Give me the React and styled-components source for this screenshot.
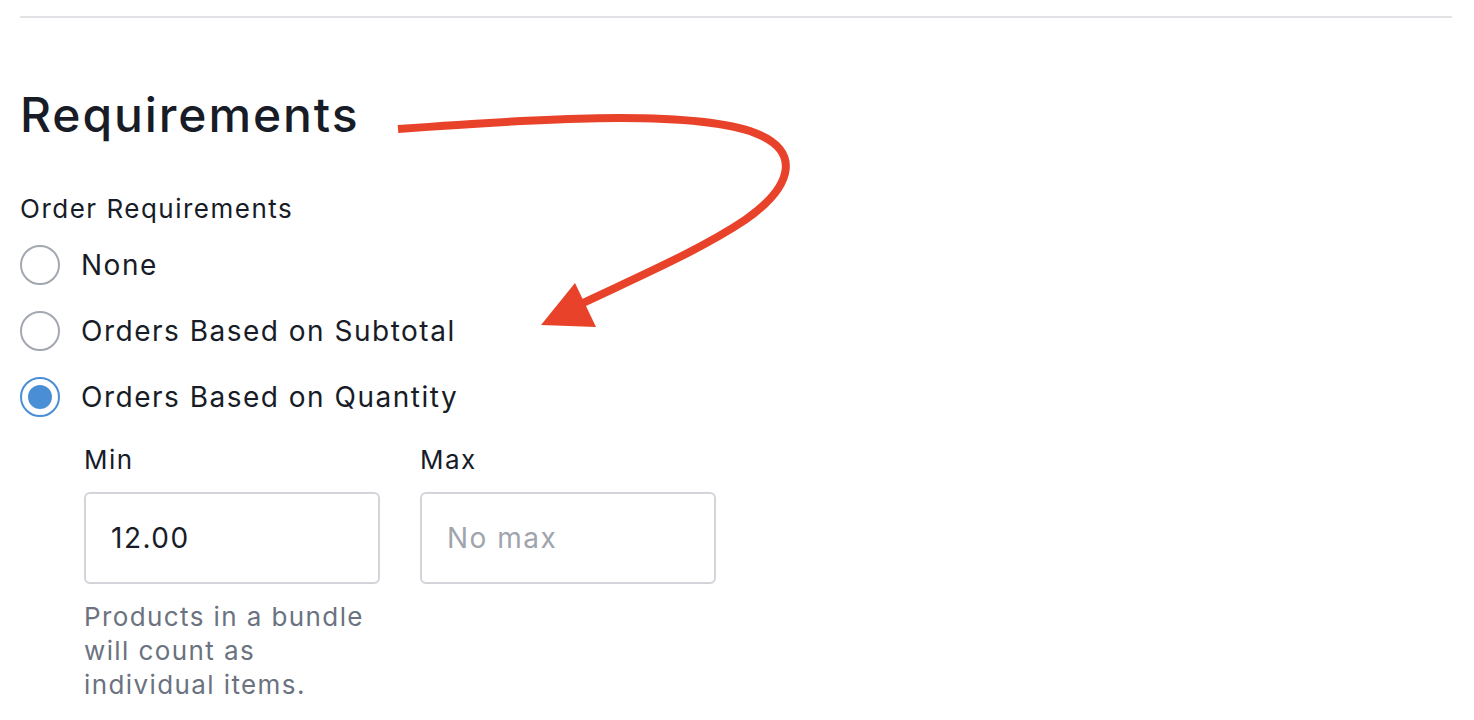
import React from 'react';
import styled, { createGlobalStyle } from 'styled-components';

const GlobalStyle = createGlobalStyle`
  body {
    margin: 0;
    background: #ffffff;
    font-family: Inter, "Noto Sans", sans-serif;
    color: #171c27;
  }
`;

const Page = styled.div`
  position: relative;
  padding: 16px 22px 0 20px;
  height: 720px;
  box-sizing: border-box;
  overflow: hidden;
`;

const Divider = styled.div`
  height: 2px;
  background: #e1e2e6;
`;

const Heading = styled.h2`
  margin: 68px 0 0;
  font-size: 48px;
  line-height: 58px;
  font-weight: 500;
  letter-spacing: 1.9px;
`;

const FieldLabel = styled.div`
  margin-top: ${p => p.$top || 0}px;
  font-size: 26px;
  line-height: 34px;
  letter-spacing: 1.5px;
  color: #171c27;
`;

const RadioList = styled.div`
  margin-top: 6px;
  display: flex;
  flex-direction: column;
`;

const RadioRow = styled.label`
  display: flex;
  align-items: center;
  height: 66px;
  gap: 21px;
  font-size: 28px;
  letter-spacing: 1.5px;
  cursor: pointer;
`;

const RadioCircle = styled.span`
  width: 40px;
  height: 40px;
  box-sizing: border-box;
  border-radius: 50%;
  border: 2px solid ${p => (p.$checked ? '#4a8fd6' : '#a3a7b0')};
  display: flex;
  align-items: center;
  justify-content: center;
  flex-shrink: 0;

  &::after {
    content: "";
    width: 24px;
    height: 24px;
    border-radius: 50%;
    background: #4a8fd6;
    display: ${p => (p.$checked ? 'block' : 'none')};
  }
`;

const RangeGrid = styled.div`
  margin-left: 64px;
  display: grid;
  grid-template-columns: 296px 296px;
  column-gap: 40px;
`;

const Field = styled.div`
  display: flex;
  flex-direction: column;
`;

const Input = styled.input`
  margin-top: 15px;
  width: 296px;
  height: 92px;
  box-sizing: border-box;
  border: 2px solid #d2d4d9;
  border-radius: 6px;
  padding: 0 25px;
  font-family: Inter, "Noto Sans", sans-serif;
  font-size: 28px;
  letter-spacing: 1.5px;
  color: #171c27;
  outline: none;

  &::placeholder {
    color: #a0a4ad;
  }
`;

const Help = styled.p`
  margin: 16px 0 0;
  font-size: 26px;
  line-height: 34px;
  letter-spacing: 1.4px;
  color: #6b7280;
  width: 296px;
`;

const Arrow = styled.svg`
  position: absolute;
  left: 0;
  top: 0;
  pointer-events: none;
`;

const options = [
  { id: 'none', label: 'None' },
  { id: 'subtotal', label: 'Orders Based on Subtotal' },
  { id: 'quantity', label: 'Orders Based on Quantity' },
];

export default function App() {
  const [selected, setSelected] = React.useState('quantity');
  return (
    <Page>
      <GlobalStyle />
      <Divider />
      <Heading>Requirements</Heading>
      <FieldLabel $top={48}>Order Requirements</FieldLabel>
      <RadioList>
        {options.map(o => (
          <RadioRow key={o.id} onClick={() => setSelected(o.id)}>
            <RadioCircle $checked={selected === o.id} />
            <span>{o.label}</span>
          </RadioRow>
        ))}
      </RadioList>
      <RangeGrid>
        <Field>
          <FieldLabel $top={13}>Min</FieldLabel>
          <Input defaultValue="12.00" />
          <Help>Products in a bundle will count as individual items.</Help>
        </Field>
        <Field>
          <FieldLabel $top={13}>Max</FieldLabel>
          <Input placeholder="No max" />
        </Field>
      </RangeGrid>
      <Arrow width="1474" height="720" viewBox="0 0 1474 720">
        <path
          d="M398,129 C520,120 690,108 755,133 C800,150 795,185 745,220 C700,250 640,276 583,303"
          fill="none"
          stroke="#e8432a"
          strokeWidth="8"
        />
        <polygon points="541,325 575,283 596,327" fill="#e8432a" />
      </Arrow>
    </Page>
  );
}
